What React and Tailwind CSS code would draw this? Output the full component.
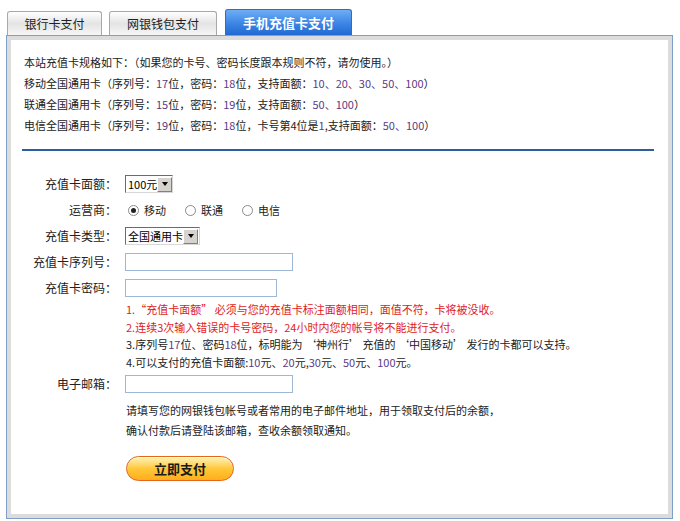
const font = { fontFamily: '"Noto Sans CJK SC", "Liberation Sans", sans-serif' };

const Num = ({ children }) => <span className="text-[#5b3a86]">{children}</span>;

const Tab = ({ active, children }) => (
  <div
    className={
      active
        ? "flex h-[26px] w-[127px] items-center justify-center rounded-t-[3px] border border-b-0 border-[#2f6cc4] bg-gradient-to-b from-[#6eaef5] via-[#3f88e6] to-[#1f69d3] text-[13px] font-bold text-white"
        : "flex h-[24px] items-center justify-center rounded-t-[3px] border border-b-0 border-[#a8a8a8] bg-gradient-to-b from-white via-[#e4e4e4] to-[#f6f6f6] text-[12px] text-[#222]"
    }
  >
    {children}
  </div>
);

const FakeSelect = ({ width, children }) => (
  <div
    className={`flex h-[18px] items-center overflow-hidden border border-t-[#6b6b6b] border-l-[#6b6b6b] border-r-[#d8d8d8] border-b-[#d8d8d8] bg-white ${width}`}
  >
    <span className="flex-1 whitespace-nowrap pl-[2px] text-[11px] leading-none text-black">{children}</span>
    <span className="mr-[1px] flex h-[15px] w-[15px] shrink-0 items-center justify-center border border-t-white border-l-white border-r-[#808080] border-b-[#808080] bg-[#d6d3ce]">
      <span className="h-0 w-0 border-x-[3.5px] border-t-[4px] border-x-transparent border-t-black" />
    </span>
  </div>
);

const Radio = ({ checked, label }) => (
  <label className="flex items-center gap-[5px]">
    <span className="flex h-[11px] w-[11px] items-center justify-center rounded-full border border-[#8a8a8a] bg-white">
      {checked && <span className="h-[5px] w-[5px] rounded-full bg-[#222]" />}
    </span>
    <span>{label}</span>
  </label>
);

const Input = ({ width }) => (
  <div className={`h-[18px] border border-[#9fb7d6] bg-white ${width}`} />
);

const Row = ({ label, children }) => (
  <div className="flex h-[26px] items-center">
    <div className="w-[106px] text-right text-[12px] text-[#222]">{label}</div>
    <div className="ml-[8px] flex items-center">{children}</div>
  </div>
);

export default function App() {
  return (
    <div className="min-h-[521px] bg-white pt-[9px] text-[11px] text-[#222]" style={font}>
      <div className="ml-[7px] flex items-end gap-[7px]">
        <div className="w-[95px]">
          <Tab>银行卡支付</Tab>
        </div>
        <div className="w-[108px]">
          <Tab>网银钱包支付</Tab>
        </div>
        <div className="ml-[1px]">
          <Tab active>手机充值卡支付</Tab>
        </div>
      </div>

      <div className="ml-[6px] w-[667px] border border-[#7d9fca]">
        <div className="h-[482px] border-[4px] border-[#dcdcdc] bg-white">
          <div className="pl-[13px] pt-[12px] leading-[21px]">
            <p>本站充值卡规格如下：（如果您的卡号、密码长度跟本规则不符，请勿使用。）</p>
            <p>
              移动全国通用卡（序列号：<Num>17</Num>位，密码：<Num>18</Num>位，支持面额：
              <Num>10、20、30、50、100</Num>）
            </p>
            <p>
              联通全国通用卡（序列号：<Num>15</Num>位，密码：<Num>19</Num>位，支持面额：
              <Num>50、100</Num>）
            </p>
            <p>
              电信全国通用卡（序列号：<Num>19</Num>位，密码：<Num>18</Num>位，卡号第4位是
              <Num>1</Num>,支持面额：<Num>50、100</Num>）
            </p>
          </div>

          <div className="ml-[11px] mr-[14px] mt-[13px] h-[2px] bg-[#2c5d9c]" />

          <div className="mt-[20px]">
            <Row label="充值卡面额：">
              <FakeSelect width="w-[48px]">100元</FakeSelect>
            </Row>
            <Row label="运营商：">
              <div className="ml-[3px] flex items-center gap-[19px] text-[11px]">
                <Radio checked label="移动" />
                <Radio label="联通" />
                <Radio label="电信" />
              </div>
            </Row>
            <Row label="充值卡类型：">
              <FakeSelect width="w-[75px]">全国通用卡</FakeSelect>
            </Row>
            <Row label="充值卡序列号：">
              <Input width="w-[168px]" />
            </Row>
            <Row label="充值卡密码：">
              <Input width="w-[152px]" />
            </Row>

            <div className="ml-[115px] leading-[17.5px]">
              <p className="text-[#e01b1b]">1.“充值卡面额” 必须与您的充值卡标注面额相同，面值不符，卡将被没收。</p>
              <p className="text-[#e01b1b]">2.连续3次输入错误的卡号密码，24小时内您的帐号将不能进行支付。</p>
              <p>
                3.序列号<Num>17</Num>位、密码<Num>18</Num>位，标明能为 ‘神州行’ 充值的 ‘中国移动’ 发行的卡都可以支持。
              </p>
              <p>
                4.可以支付的充值卡面额:<Num>10</Num>元、<Num>20</Num>元,<Num>30</Num>元、<Num>50</Num>元、
                <Num>100</Num>元。
              </p>
            </div>

            <Row label="电子邮箱：">
              <Input width="w-[168px]" />
            </Row>

            <div className="ml-[115px] mt-[3px] leading-[20px]">
              <p>请填写您的网银钱包帐号或者常用的电子邮件地址，用于领取支付后的余额，</p>
              <p>确认付款后请登陆该邮箱，查收余额领取通知。</p>
            </div>

            <button className="ml-[115px] mt-[16px] flex h-[25px] w-[108px] items-center justify-center rounded-full border-[1.5px] border-[#e4661a] bg-gradient-to-b from-[#fff3b0] via-[#ffc838] to-[#ffae1a] text-[13px] font-bold text-[#1a1a1a] shadow-[inset_0_1px_0_rgba(255,255,255,0.8)]">
              立即支付
            </button>
          </div>
        </div>
      </div>
    </div>
  );
}
